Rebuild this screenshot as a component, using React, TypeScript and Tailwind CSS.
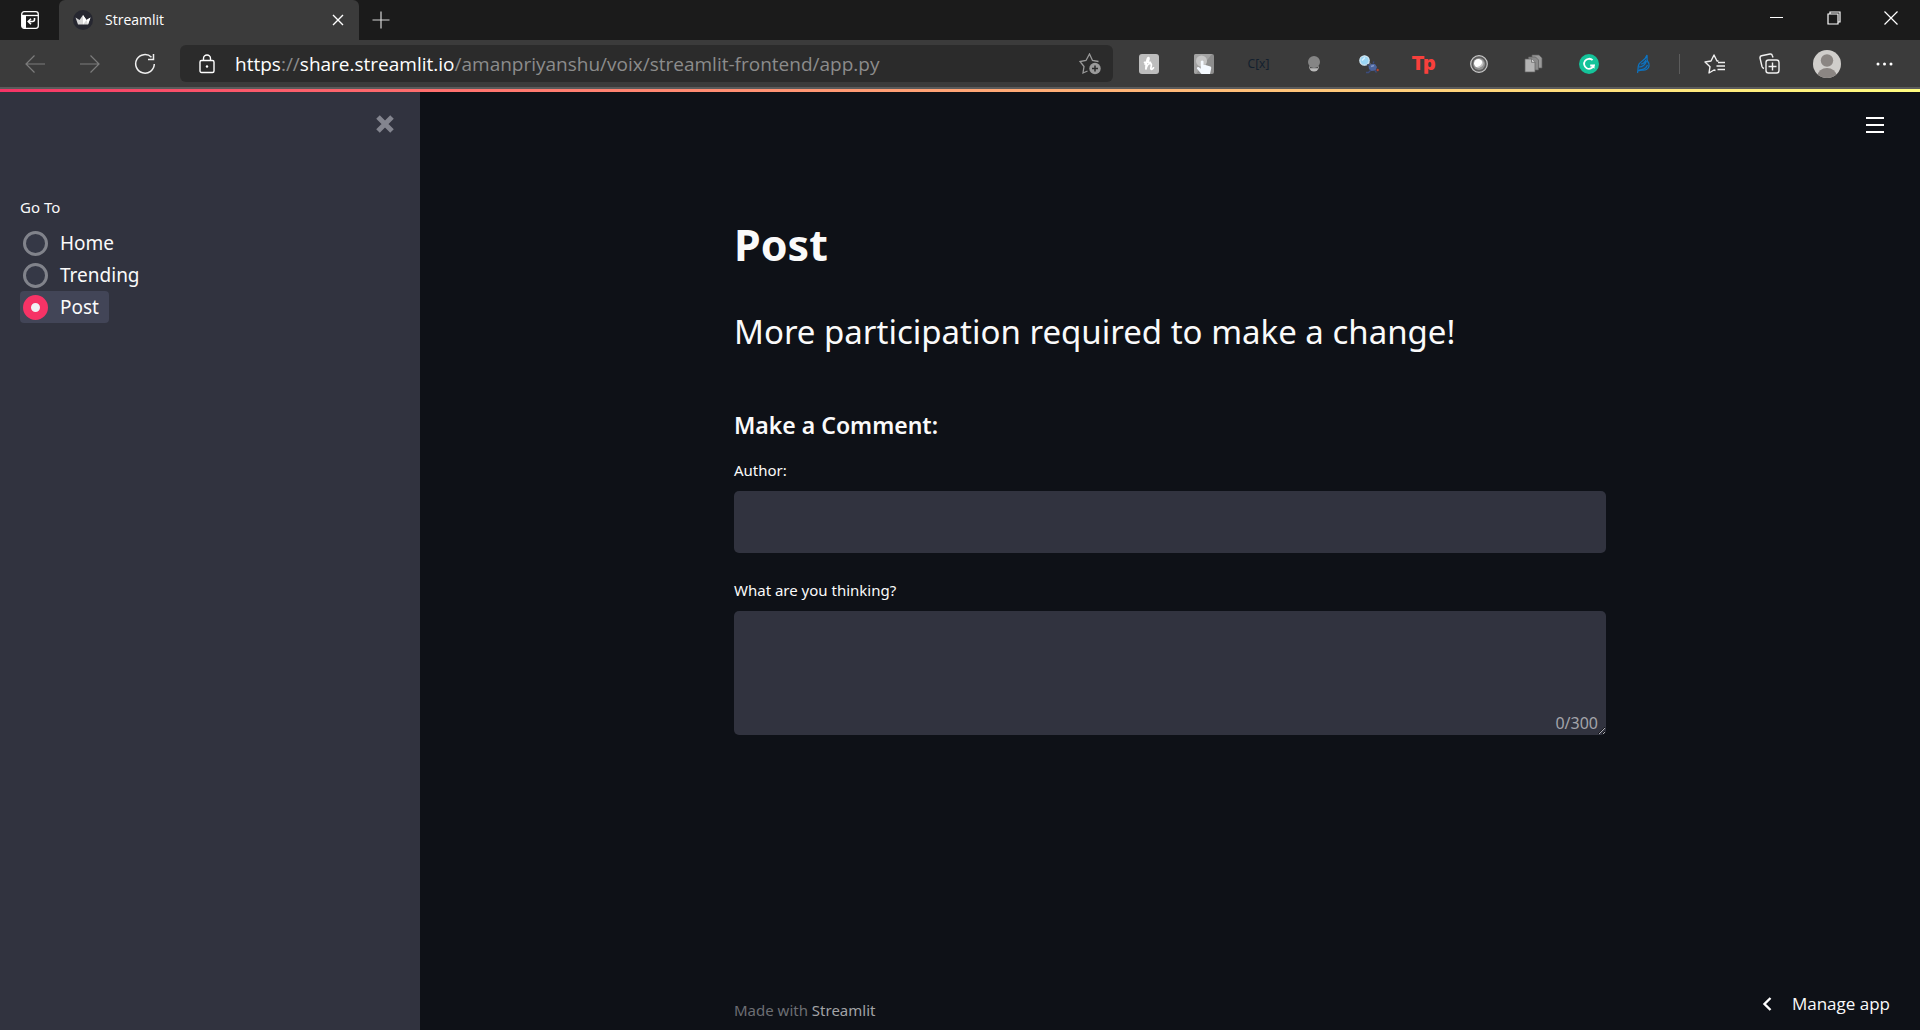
import { useState } from "react";
import type { ReactNode } from "react";

const IconButton = ({
  label,
  className = "w-[55px]",
  children,
}: {
  label: string;
  className?: string;
  children: ReactNode;
}) => (
  <button
    type="button"
    aria-label={label}
    className={`flex h-full shrink-0 items-center justify-center ${className}`}
  >
    {children}
  </button>
);

const TabBar = () => (
  <div className="flex h-10 items-stretch bg-[#1b1b1b] text-white">
    <IconButton label="Tab actions" className="w-[59px]">
      <svg width="20" height="20" viewBox="0 0 20 20" fill="none" stroke="#fff" strokeWidth="1.3">
        <rect x="1.7" y="1.7" width="16.6" height="16.6" rx="2.5" />
        <path d="M2 5.5h16" />
        <path d="M2 5h4v13H3.500l-1.500-1.500z" fill="#fff" stroke="none" />
        <path d="M14.500 8v1.500a2 2 0 0 1-2 2H8.500M11 8.700l-2.800 2.800 2.800 2.800" strokeWidth="1.600" />
      </svg>
    </IconButton>
    <div className="flex w-[300px] items-center rounded-t-md bg-[#3b3b3b] px-[14px]">
      <svg width="20" height="20" viewBox="0 0 20 20">
        <circle cx="10" cy="10" r="10" fill="#262730" />
        <path d="M2.500 7.500l4 2.500L10 5l3.500 5 4-2.500-2.500 7H5z" fill="#d8d8d8" />
        <path d="M10 5l3.500 5L10 14.500zM17.500 7.500L15 14.500l-1.500-4.500z" fill="#fff" />
      </svg>
      <span className="ml-3 flex-1 pb-[2px] font-['Open_Sans','Noto_Sans',sans-serif] text-[14px]">Streamlit</span>
      <button type="button" aria-label="Close tab">
        <svg width="14" height="14" viewBox="0 0 14 14" stroke="#fff" strokeWidth="1.400">
          <path d="M2 2l10 10M12 2L2 12" />
        </svg>
      </button>
    </div>
    <IconButton label="New tab" className="w-11">
      <svg width="18" height="18" viewBox="0 0 18 18" stroke="#d6d6d6" strokeWidth="1.200">
        <path d="M9 0.500v17M0.500 9h17" />
      </svg>
    </IconButton>
    <div className="ml-auto flex pr-px pb-1">
      <IconButton label="Minimize" className="w-[57px]">
        <svg width="13" height="13" viewBox="0 0 13 13">
          <path d="M0 5.500h13" stroke="#fff" />
        </svg>
      </IconButton>
      <IconButton label="Restore" className="w-[57px]">
        <svg width="14" height="14" viewBox="0 0 14 14" fill="none" stroke="#fff" strokeWidth="1.200">
          <path d="M1 3h10v10H1zM3 3V1h10v10h-2" />
        </svg>
      </IconButton>
      <IconButton label="Close" className="w-[57px]">
        <svg width="14" height="14" viewBox="0 0 14 14" stroke="#fff" strokeWidth="1.200">
          <path d="M0.500 0.500l13 13M13.500 0.500l-13 13" />
        </svg>
      </IconButton>
    </div>
  </div>
);

const extensions: { name: string; icon: ReactNode }[] = [
  {
    name: "Honey",
    icon: (
      <svg width="20" height="20" viewBox="0 0 20 20">
        <rect width="20" height="20" rx="3" fill="#bdbdbd" />
        <path
          d="M6 10c3-1 5-6 3.500-6.300C8 3.500 7 10 6.800 15.500c1-4 3-6 4.700-6s.5 3.500.3 4.800c0 1.500 1.500 1.300 2.700-.5M5.500 8.300h6"
          fill="none"
          stroke="#fff"
          strokeWidth="1.700"
          strokeLinecap="round"
        />
      </svg>
    ),
  },
  {
    name: "Click helper",
    icon: (
      <svg width="20" height="20" viewBox="0 0 20 20">
        <rect width="20" height="20" rx="2" fill="#8d8d8d" />
        <path d="M0 2a2 2 0 0 1 2-2h16L2 20a2 2 0 0 1-2-2z" fill="#a2a2a2" />
        <circle cx="7.500" cy="7" r="5.500" fill="#c4c4c4" />
        <path
          d="M6.800 7.300q1.300-1.800 2.700 0V11h2l5 1.500q1 .5.700 2L16 20H7.500l-4.700-5.500q.4-2 2.200-1.200l1.800 1.400z"
          fill="#f4f9ff"
        />
      </svg>
    ),
  },
  {
    name: "Code formula",
    icon: <span className="font-['Noto_Sans',sans-serif] text-[12px] leading-none text-[#13202e]">C[x]</span>,
  },
  {
    name: "Lamp",
    icon: (
      <svg width="14" height="18" viewBox="0 0 14 18">
        <ellipse cx="7" cy="12.500" rx="4.700" ry="4" fill="#b9b9b9" />
        <path d="M3 12.500h8" stroke="#4c4c4c" strokeWidth="1.500" />
        <circle cx="7" cy="7" r="6" fill="#858585" />
      </svg>
    ),
  },
  {
    name: "Bug finder",
    icon: (
      <svg width="20" height="20" viewBox="0 0 20 20">
        <path d="M9 8l4 4" stroke="#5b636e" strokeWidth="1.800" />
        <circle cx="5.500" cy="6.500" r="4.700" fill="#9bd6f5" stroke="#d5eaf5" strokeWidth="1.200" />
        <path d="M3 6.500l3-3" stroke="#d8f1ff" strokeWidth="1.500" />
        <path d="M9.500 12l3-2 3.500 0 2 3-1.500 3.500-4.500.5-2-2z" fill="#4b639c" />
        <path d="M10 11.500l-2-1M12 16l-2.500 2.500H7M16 16.500l1.500 2M14 9.500l1-2" stroke="#3b4c7c" strokeWidth="1.300" fill="none" />
        <path d="M12 12.500l3-1" stroke="#8498c6" strokeWidth="1.500" />
        <circle cx="18.700" cy="16" r="1.200" fill="#b8432b" />
      </svg>
    ),
  },
  {
    name: "Toolkit",
    icon: (
      <span className="font-[Inter,'Open_Sans',sans-serif] text-[19px] leading-none font-black text-[#f8403c]">Tp</span>
    ),
  },
  {
    name: "Sphere",
    icon: (
      <svg width="18" height="18" viewBox="0 0 18 18">
        <circle cx="9" cy="9" r="8.300" fill="#5c5c5c" stroke="#c9c9c9" strokeWidth="1.200" />
        <circle cx="9" cy="9" r="6" fill="#929292" />
        <circle cx="8.300" cy="8.300" r="4.300" fill="#fff" />
        <path d="M12 5c1 3-1 6-5 7 3 1.500 7-1 6.500-4.500z" fill="#c4c4c4" />
      </svg>
    ),
  },
  {
    name: "Copy pages",
    icon: (
      <svg width="19" height="19" viewBox="0 0 19 19" stroke="#5e5e5e" strokeWidth="0.700">
        <path d="M8 1h7l3 3v10H8z" fill="#9a9a9a" />
        <path d="M4.500 3h7l3 3v10h-10z" fill="#8a8a8a" />
        <path d="M1 5h6.500l3.500 3v10H1z" fill="#b3b3b3" />
        <path d="M7.500 5v3.300H11" fill="#d5d5d5" />
      </svg>
    ),
  },
  {
    name: "Grammarly",
    icon: (
      <svg width="20" height="20" viewBox="0 0 20 20">
        <circle cx="10" cy="10" r="10" fill="#15c39a" />
        <path d="M13.600 6.200a5 5 0 1 0 1.200 5.300h-3.600" fill="none" stroke="#fff" strokeWidth="1.800" />
        <path d="M15.500 10.600v4.200l-3.300-2.600" fill="#fff" />
      </svg>
    ),
  },
  {
    name: "Quill",
    icon: (
      <svg width="16" height="20" viewBox="0 0 16 20" fill="none" stroke="#0d74c2" strokeWidth="1.200">
        <path d="M1.500 19c1-4 0-6 1.500-9 1.500-3 6.500-3.500 8-9 .5 3-.5 4 .5 6 2.500 3 2 7-1 8.500-3 1.500-6-.5-8 1.500" fill="#2c4257" />
        <path d="M3 13c3 0 6-2 7.500-6M3 16c4 0 7-1.500 8.500-5M5 10c2 0 3.500-1 5-4" />
      </svg>
    ),
  },
];

const Toolbar = () => (
  <div className="flex h-[49px] items-stretch border-b-2 border-[#5b5b5b] bg-[#3b3b3b] pr-2 pl-[7px]">
    <IconButton label="Back">
      <svg width="20" height="18" viewBox="0 0 20 18" fill="none" stroke="#7c7c7c" strokeWidth="1.200">
        <path d="M20 9H1M9.500 0.500L1 9l8.500 8.500" />
      </svg>
    </IconButton>
    <IconButton label="Forward">
      <svg width="20" height="18" viewBox="0 0 20 18" fill="none" stroke="#7c7c7c" strokeWidth="1.200">
        <path d="M0 9h19M10.500 0.500L19 9l-8.500 8.500" />
      </svg>
    </IconButton>
    <IconButton label="Refresh">
      <svg width="22" height="22" viewBox="0 0 22 22" fill="none" stroke="#f0f0f0" strokeWidth="1.500">
        <path d="M17.500 4.200A9.300 9.300 0 1 0 20.300 11" />
        <path d="M19.500 1v5.500H14" />
      </svg>
    </IconButton>
    <form className="mx-2 my-[5px] flex min-w-0 flex-1 items-center rounded-md bg-[#2b2b2b] pr-3 pl-[19px]">
      <svg width="16" height="20" viewBox="0 0 16 20" fill="none" stroke="#fff" strokeWidth="1.400">
        <rect x="1" y="6.500" width="14" height="12" rx="1.500" />
        <path d="M4.500 6.500V4.500a3.500 3.500 0 0 1 7 0v2" />
        <circle cx="8" cy="12.500" r="1.200" fill="#fff" stroke="none" />
      </svg>
      <a
        href="#url"
        className="ml-5 flex-1 truncate font-['Open_Sans','Noto_Sans',sans-serif] text-[19px] leading-7 text-[#8c8c8c]"
      >
        <span className="text-white">https</span>://<span className="text-white">share.streamlit.io</span>
        /amanpriyanshu/voix/streamlit-frontend/app.py
      </a>
      <button type="button" aria-label="Add to favorites">
        <svg width="22" height="22" viewBox="0 0 22 22" fill="none" stroke="#9a9a9a" strokeWidth="1.300">
          <path d="M8.500 18L4 20l1-6.500L1 8.500l6-1L10.500 1l3 6.500 6 1" />
          <circle cx="16" cy="15.500" r="5.700" fill="#9a9a9a" stroke="none" />
          <path d="M16 12.500v6M13 15.500h6" stroke="#2b2b2b" strokeWidth="1.500" />
        </svg>
      </button>
    </form>
    {extensions.map((ext) => (
      <IconButton key={ext.name} label={ext.name}>
        {ext.icon}
      </IconButton>
    ))}
    <div className="flex w-4 items-center justify-center">
      <div className="h-5 w-px bg-[#5c5c5c]" />
    </div>
    <IconButton label="Favorites">
      <svg width="21" height="20" viewBox="0 0 21 20" fill="none" stroke="#f0f0f0" strokeWidth="1.400">
        <path d="M11.500 16.500L10 16l-5 3 1-6.300L1 8l6-1 3-6 3 6h1.500" strokeLinejoin="round" />
        <path d="M14 8.500h7M12.500 12h8.500M13.500 15.500H21" />
      </svg>
    </IconButton>
    <IconButton label="Collections">
      <svg width="21" height="21" viewBox="0 0 21 21" fill="none" stroke="#f0f0f0" strokeWidth="1.400">
        <rect x="7" y="7" width="13" height="13" rx="2.500" />
        <path d="M13.500 9.500v8M9.500 13.500h8" />
        <path d="M14 4.500l-.7-2A2 2 0 0 0 11 1L2.500 2.800A2 2 0 0 0 1 5l2 8.500c.3 1 1 1.700 2 2" />
      </svg>
    </IconButton>
    <IconButton label="Profile" className="w-[60px]">
      <svg width="28" height="28" viewBox="0 0 28 28">
        <clipPath id="avatar">
          <circle cx="14" cy="14" r="14" />
        </clipPath>
        <g clipPath="url(#avatar)">
          <rect width="28" height="28" fill="#d0cecb" />
          <circle cx="14" cy="10.500" r="6.200" fill="#8b8683" />
          <ellipse cx="14" cy="26" rx="9.500" ry="8" fill="#8b8683" />
        </g>
      </svg>
    </IconButton>
    <IconButton label="Settings and more">
      <svg width="17" height="4" viewBox="0 0 17 4" fill="#fff">
        <circle cx="2" cy="2" r="1.500" />
        <circle cx="8.500" cy="2" r="1.500" />
        <circle cx="15" cy="2" r="1.500" />
      </svg>
    </IconButton>
  </div>
);

const pages = ["Home", "Trending", "Post"];

const Sidebar = () => {
  const [page, setPage] = useState("Post");

  return (
    <aside className="w-[420px] shrink-0 bg-[#31333f] px-5 pt-[22px]">
      <div className="flex justify-end pr-[6px]">
        <button type="button" aria-label="Close sidebar">
          <svg width="18" height="20" viewBox="0 0 18 20" stroke="#83858f" strokeWidth="5">
            <path d="M2 3l14 14M16 3L2 17" />
          </svg>
        </button>
      </div>
      <fieldset className="mt-[61px]">
        <legend className="mb-2 text-[15px] leading-6">Go To</legend>
        <div className="flex flex-col items-start">
          {pages.map((name) => (
            <label
              key={name}
              className="flex h-8 items-center rounded-[4px] pr-[10px] pl-[3px] text-[19px] has-checked:bg-[#424557]"
            >
              <input
                type="radio"
                name="page"
                value={name}
                checked={page === name}
                onChange={() => setPage(name)}
                className="mr-3 size-[25px] appearance-none rounded-full border-[3px] border-[#81838b] bg-[#353846] checked:border-[8px] checked:border-[#f63366] checked:bg-[#f0f2f6]"
              />
              {name}
            </label>
          ))}
        </div>
      </fieldset>
    </aside>
  );
};

const CommentForm = () => {
  const [author, setAuthor] = useState("");
  const [comment, setComment] = useState("");

  return (
    <form>
      <h3 className="mt-[51px] text-[23px] leading-8 font-semibold">Make a Comment:</h3>
      <label htmlFor="author" className="mt-[17px] block text-[15px] leading-6">
        Author:
      </label>
      <input
        id="author"
        type="text"
        value={author}
        onChange={(e) => setAuthor(e.target.value)}
        className="mt-[9px] block h-[62px] w-full rounded-[5px] bg-[#31333f] px-4 text-[19px] outline-none"
      />
      <label htmlFor="comment" className="mt-[25px] block text-[15px] leading-6">
        What are you thinking?
      </label>
      <div className="relative mt-[9px]">
        <textarea
          id="comment"
          maxLength={300}
          value={comment}
          onChange={(e) => setComment(e.target.value)}
          className="block h-[124px] w-full resize-y rounded-[5px] bg-[#31333f] p-4 text-[19px] outline-none [color-scheme:dark]"
        />
        <span className="pointer-events-none absolute right-2 bottom-0 text-[16px] leading-6 text-[#a3a4aa]">
          {comment.length}/300
        </span>
      </div>
    </form>
  );
};

const App = () => (
  <div className="flex min-h-screen flex-col bg-[#0e1117] font-['Noto_Sans','Open_Sans',sans-serif] text-[#fafafa]">
    <TabBar />
    <Toolbar />
    <div className="h-[3px] bg-linear-to-r from-[#f63366] to-[#fffd80]" />
    <div className="flex flex-1">
      <Sidebar />
      <div className="relative flex flex-1 flex-col">
        <button type="button" aria-label="Menu" className="absolute top-6 right-9">
          <svg width="18" height="18" viewBox="0 0 18 18" stroke="#fff" strokeWidth="2.200">
            <path d="M0 2h18M0 9h18M0 16h18" />
          </svg>
        </button>
        <main className="mx-auto w-full max-w-[872px] flex-1 pt-[125px]">
          <h1 className="text-[43px] leading-[56px] font-bold">Post</h1>
          <h2 className="mt-[33px] text-[33px] leading-[52px]">More participation required to make a change!</h2>
          <CommentForm />
        </main>
        <footer className="mx-auto w-full max-w-[872px] pb-2 text-[15px] leading-6 text-[#6c6e73]">
          Made with{" "}
          <a href="#streamlit" className="text-[#a2a3a6]">
            Streamlit
          </a>
        </footer>
        <button
          type="button"
          className="absolute right-[30px] bottom-[14px] flex items-center gap-5 font-['Open_Sans',sans-serif] text-[17px] leading-6"
        >
          <svg width="10" height="14" viewBox="0 0 10 14" fill="none" stroke="#fff" strokeWidth="2.400">
            <path d="M8.500 1L2.500 7l6 6" />
          </svg>
          Manage app
        </button>
      </div>
    </div>
  </div>
);

export default App;
